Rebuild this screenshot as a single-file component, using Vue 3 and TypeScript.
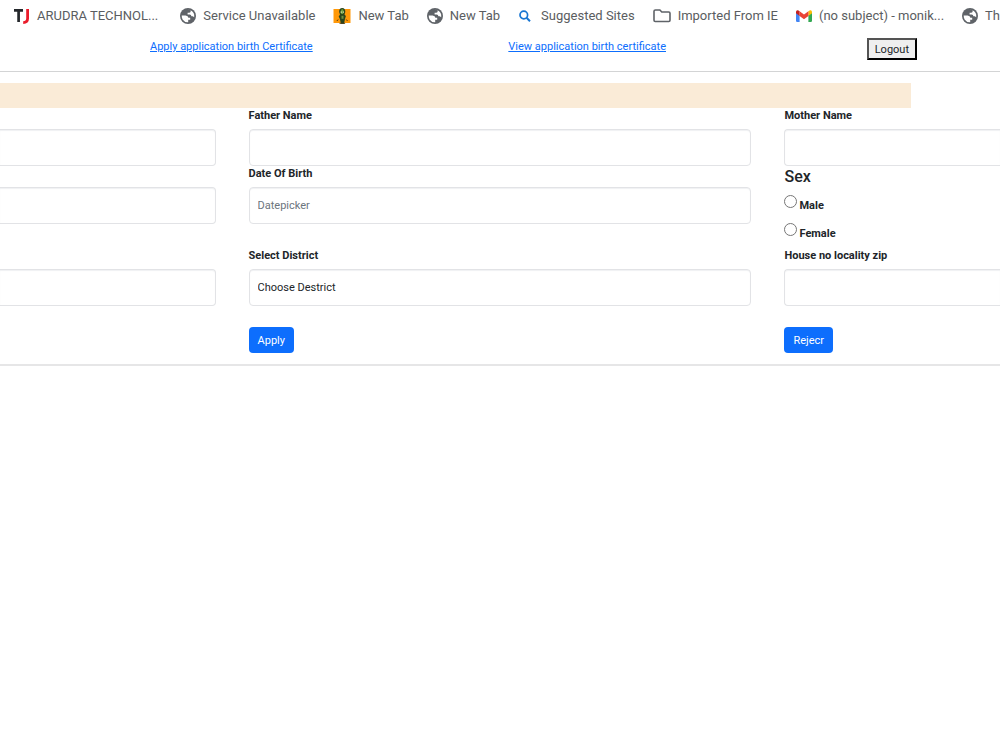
<script setup lang="ts">
import { ref } from 'vue'

interface Bookmark {
  icon: 'tj' | 'globe' | 'figure' | 'search' | 'folder' | 'gmail'
  label: string
}

const bookmarks: Bookmark[] = [
  { icon: 'tj', label: 'ARUDRA TECHNOL...' },
  { icon: 'globe', label: 'Service Unavailable' },
  { icon: 'figure', label: 'New Tab' },
  { icon: 'globe', label: 'New Tab' },
  { icon: 'search', label: 'Suggested Sites' },
  { icon: 'folder', label: 'Imported From IE' },
  { icon: 'gmail', label: '(no subject) - monik...' },
  { icon: 'globe', label: 'Th' },
]

const sex = ref<string>('')
const district = ref<string>('')
</script>

<template>
  <div class="page">
    <nav class="bookmarks" aria-label="Bookmarks">
      <a v-for="(b, i) in bookmarks" :key="i" href="#" class="bookmark" :class="b.icon">
        <svg v-if="b.icon === 'tj'" class="icon" viewBox="0 0 16 16" aria-hidden="true">
          <path d="M0 2.4H9M4.6 2.4V14" fill="none" stroke="#25282c" stroke-width="2.7" />
          <path d="M13.6 1V10.5Q13.6 14.5 9.2 14.6" fill="none" stroke="#ea1c2b" stroke-width="2.8" />
        </svg>
        <svg v-else-if="b.icon === 'globe'" class="icon" viewBox="0 0 16 16" aria-hidden="true">
          <circle cx="8" cy="8" r="8" fill="#5f6368" />
          <path d="M1.7 7.6H5.6Q8.2 7.8 8.4 9.8H10.2V11.8H8.2V14.2Q4.6 14.4 2.6 11.4 1.6 9.6 1.7 7.6Z" fill="#fff" />
          <path d="M8 1.8 10.6 2.3V3.8Q10.4 4.8 9 4.8H7.6V6.4H9.8Q11.2 6.6 11.4 8.2H12.8L14.2 9.2Q14.8 4.2 10.6 2.3 9.4 1.7 8 1.8Z" fill="#fff" />
        </svg>
        <svg v-else-if="b.icon === 'figure'" class="icon" viewBox="0 0 17 16" aria-hidden="true">
          <path d="M0 1H17V15H0Z" fill="#ff9808" />
          <path d="M8.7 0C11 0 12 2 11.8 4L11 6.6 12.4 8 11.5 11 10.5 15.8H7.4L6.4 11 5.2 8.5 6.5 6.6 5.6 3.9C5.6 1.6 6.7 0 8.7 0Z" fill="#29451d" />
          <path d="M8 1.2H9.6L10.4 4 9.5 6H7.8L7 4Z" fill="#6b9e3f" />
          <path d="M7.2 3.5H8.4V4.7H7.2ZM9.3 3.5H10.4V4.7H9.3Z" fill="#d9dfb4" />
          <path d="M8 7.8H10V10.8H8Z" fill="#709142" />
          <path d="M4.6 11.5 3.4 13M12.8 11.5 14 13M6 15.3H11.6" stroke="#4b3b13" />
        </svg>
        <svg v-else-if="b.icon === 'search'" class="icon" viewBox="0 0 16 16" aria-hidden="true">
          <circle cx="5.8" cy="7" r="3.8" fill="none" stroke="#1976d2" stroke-width="1.7" />
          <path d="M8.6 9.8 12 13.2" stroke="#1976d2" stroke-width="2" />
        </svg>
        <svg v-else-if="b.icon === 'folder'" class="icon" viewBox="0 0 18 16" aria-hidden="true">
          <path d="M2.4 2H6.9L8.8 4H15.8Q17 4 17 5.2V12.3Q17 13.5 15.8 13.5H2.2Q1 13.5 1 12.3V3.3Q1 2 2.4 2Z" fill="none" stroke="#5f6368" stroke-width="1.6" />
        </svg>
        <svg v-else class="icon" viewBox="0 0 16 16" aria-hidden="true">
          <path d="M0 4.6 3.6 7.3V14H1.2Q0 14 0 12.8Z" fill="#4285f4" />
          <path d="M16 4.6 12.4 7.3V14H14.8Q16 14 16 12.8Z" fill="#34a853" />
          <path d="M12.4 3.2 14 2.2Q16 1.8 16 4V5.2L12.4 7.9Z" fill="#fbbc04" />
          <path d="M0 5.2V4Q0 1.8 2 2.2L3.6 3.2V7.9Z" fill="#c5221f" />
          <path d="M3.6 3.2 8 6.5 12.4 3.2V7.9L8 11.2 3.6 7.9Z" fill="#ea4335" />
        </svg>
        <span>{{ b.label }}</span>
      </a>
    </nav>

    <header class="menu">
      <a href="#">Apply application birth Certificate</a>
      <a href="#">View application birth certificate</a>
      <button type="button" class="logout">Logout</button>
    </header>

    <div class="banner"></div>

    <form class="form" @submit.prevent>
      <div class="field edge">
        <input type="text" class="control" aria-label="Name" />
      </div>
      <div class="field">
        <label for="father">Father Name</label>
        <input id="father" type="text" class="control" />
      </div>
      <div class="field bleed">
        <label for="mother">Mother Name</label>
        <input id="mother" type="text" class="control" />
      </div>

      <div class="field edge">
        <input type="text" class="control" aria-label="Contact" />
      </div>
      <div class="field">
        <label for="dob">Date Of Birth</label>
        <input id="dob" type="text" class="control" placeholder="Datepicker" />
      </div>
      <fieldset class="sex">
        <legend>Sex</legend>
        <div class="choice">
          <input id="male" v-model="sex" type="radio" name="sex" value="male" />
          <label for="male">Male</label>
        </div>
        <div class="choice">
          <input id="female" v-model="sex" type="radio" name="sex" value="female" />
          <label for="female">Female</label>
        </div>
      </fieldset>

      <div class="field edge">
        <input type="text" class="control" aria-label="State" />
      </div>
      <div class="field">
        <label for="district">Select District</label>
        <select id="district" v-model="district" class="control">
          <option value="">Choose Destrict</option>
        </select>
      </div>
      <div class="field bleed">
        <label for="house">House no locality zip</label>
        <input id="house" type="text" class="control" />
      </div>

      <div class="action apply">
        <button type="submit" class="primary">Apply</button>
      </div>
      <div class="action">
        <button type="button" class="primary">Rejecr</button>
      </div>
    </form>
  </div>
</template>

<style>
body {
  margin: 0;
  background: #fff;
}
</style>

<style scoped>
.page {
  overflow: hidden;
  color: #212529;
  font-family: Roboto, "Noto Sans", sans-serif;
  font-size: 11px;
  line-height: 16px;
}

.page *,
.page *::before {
  box-sizing: border-box;
}

.bookmarks {
  display: flex;
  gap: 18px;
  height: 32px;
  padding-left: 14px;
  align-items: center;
  overflow: hidden;
}

.bookmark {
  display: flex;
  flex: none;
  align-items: center;
  gap: 7px;
  color: #5a5d61;
  font-size: 13px;
  line-height: 20px;
  text-decoration: none;
  white-space: nowrap;
}

.bookmark.tj {
  padding-right: 4px;
}

.icon {
  width: 16px;
  height: 16px;
  flex: none;
}

.figure .icon,
.folder .icon {
  width: 18px;
}

.menu {
  display: grid;
  grid-template-columns: 1fr 1fr auto;
  align-items: start;
  height: 40px;
  padding: 6px 83px 0 150px;
  border-bottom: 1px solid #d3d4d5;
}

.menu a {
  padding-top: 1px;
  color: #0d6efd;
  text-decoration: underline;
}

.logout {
  height: 22px;
  padding: 2px 6px 0;
  border: 2px outset #000;
  background: #efefef;
  color: #212529;
  font: inherit;
}

.banner {
  height: 25px;
  margin: 11px 89px 0 0;
  background: #faebd7;
}

.form {
  display: grid;
  grid-template-columns: 3fr 7fr 3fr;
  column-gap: 33px;
  padding-bottom: 11px;
  border-bottom: 2px solid #e6e6e7;
}

.field label {
  display: block;
  margin-bottom: 5px;
  font-weight: 700;
}

.field.edge {
  padding-top: 21px;
}

.control {
  display: block;
  width: 100%;
  height: 37px;
  padding: 0 8px;
  border: 1px solid #e2e3e6;
  border-radius: 4px;
  background: #fff;
  color: #212529;
  font: inherit;
  appearance: none;
  box-shadow: inset 0 1px 1px #f0f1f3;
}

.control::placeholder {
  color: #6c757d;
  opacity: 1;
}

.edge .control {
  border-left: 0;
  border-radius: 0 4px 4px 0;
}

.bleed .control {
  border-right: 0;
  border-radius: 4px 0 0 4px;
}

.sex {
  min-width: 0;
  margin: 0;
  padding: 0 0 4px;
  border: 0;
}

.sex legend {
  padding: 0;
  font-size: 16px;
  font-weight: 500;
  line-height: 22px;
}

.choice {
  display: flex;
  align-items: flex-start;
  height: 28px;
  padding-top: 7px;
}

.choice input {
  width: 13px;
  height: 13px;
  margin: 0 2px 0 0;
}

.choice label {
  padding-top: 3px;
  font-weight: 700;
}

.action {
  padding-top: 21px;
}

.apply {
  grid-column: 2;
}

.primary {
  height: 26px;
  padding: 2px 9px 0;
  border: 0;
  border-radius: 4px;
  background: #0d6efd;
  color: #fff;
  font: inherit;
}
</style>
